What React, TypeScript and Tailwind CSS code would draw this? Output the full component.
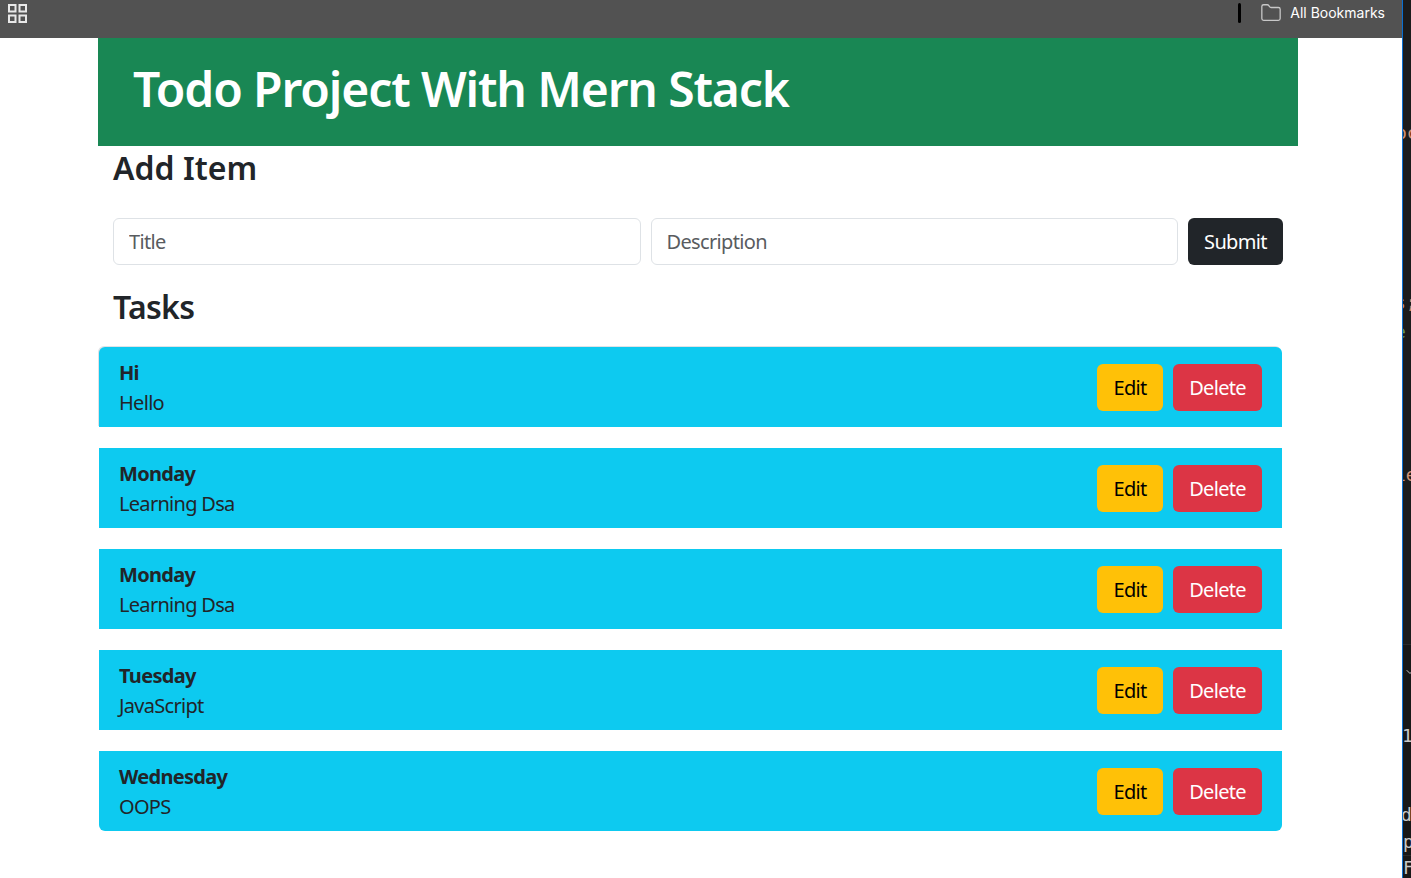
import { ChevronDown, Folder } from "lucide-react";

const tasks = [
  { title: "Hi", description: "Hello" },
  { title: "Monday", description: "Learning Dsa" },
  { title: "Monday", description: "Learning Dsa" },
  { title: "Tuesday", description: "JavaScript" },
  { title: "Wednesday", description: "OOPS" },
];

function AppsIcon() {
  return (
    <svg width="19" height="19" viewBox="0 0 19 19" fill="none" stroke="#e8e8e8" strokeWidth="2">
      <rect x="1" y="1" width="6.5" height="6.5" />
      <rect x="11.5" y="1" width="6.5" height="6.5" />
      <rect x="1" y="11.5" width="6.5" height="6.5" />
      <rect x="11.5" y="11.5" width="6.5" height="6.5" />
    </svg>
  );
}

function TaskRow({ title, description }: { title: string; description: string }) {
  return (
    <li className="flex h-20 items-center justify-between bg-[#0dcaf0] px-5 tracking-[-0.7px] first:rounded-t-md first:shadow-[-1px_-1px_0_#dfe2e6] last:rounded-b-md">
      <div className="pt-0.5 text-[#212529]">
        <div className="h-[30px] text-[20px] leading-[30px] font-bold">{title}</div>
        <div className="h-[30px] text-[20px] leading-[30px]">{description}</div>
      </div>
      <div className="flex gap-2.5">
        <button className="h-[47px] w-[66px] rounded-md bg-[#ffc107] pt-0.5 text-[20px] text-black">Edit</button>
        <button className="h-[47px] w-[89px] rounded-md bg-[#dc3545] pt-0.5 text-[20px] text-white">Delete</button>
      </div>
    </li>
  );
}

export default function App() {
  return (
    <div className="flex h-[878px] overflow-hidden bg-white font-['Noto_Sans','Open_Sans',sans-serif]">
      <div className="flex w-[1402px] flex-col">
        {/* Browser bookmarks bar */}
        <div className="flex h-[38px] shrink-0 items-center bg-[#525252] pb-[12px] pl-[8px] pr-[17px]">
          <AppsIcon />
          <div className="ml-auto h-[20px] w-[3px] rounded-sm bg-black" />
          <Folder size={22} strokeWidth={1.4} className="ml-[19px] text-[#c8c8c8]" />
          <span className="mb-[2px] ml-[8px] font-['Inter',sans-serif] text-[14px] text-white">All Bookmarks</span>
        </div>

        <div className="ml-[98px] w-[1200px]">
          <header className="flex h-[108px] items-center bg-[#198754] pb-[6px] pl-[35px]">
            <h1 className="text-[48px] leading-none font-semibold tracking-[-1.12px] text-white">Todo Project With Mern Stack</h1>
          </header>

          <div className="px-[15px]">
            <h2 className="mt-[3px] h-[38px] text-[32px] leading-[38px] font-semibold text-[#212529]">Add Item</h2>
            <form className="mt-[31px] flex gap-2.5 tracking-[-0.65px]">
              <input
                placeholder="Title"
                className="h-[47px] flex-1 rounded-md border border-[#dee2e6] px-[15px] text-[20px] placeholder:text-[#595c5f]"
              />
              <input
                placeholder="Description"
                className="h-[47px] flex-1 rounded-md border border-[#dee2e6] px-[15px] text-[20px] placeholder:text-[#595c5f]"
              />
              <button type="button" className="h-[47px] w-[95px] rounded-md bg-[#212529] text-[20px] text-white">
                Submit
              </button>
            </form>
            <h2 className="mt-[23px] h-[38px] text-[32px] leading-[38px] font-semibold tracking-[-0.7px] text-[#212529]">Tasks</h2>
          </div>

          <ul className="mt-[21px] ml-px flex w-[1183px] flex-col gap-[21px]">
            {tasks.map((task, i) => (
              <TaskRow key={i} title={task.title} description={task.description} />
            ))}
          </ul>
        </div>
      </div>

      {/* Sliver of the editor window behind the browser */}
      <div className="w-[9px] shrink-0 overflow-hidden border-l border-[#0a6fd0] bg-[#1c1c1c] font-['DejaVu_Sans_Mono',monospace] text-[18px] leading-[20px]">
        <div className="mt-[123px] -ml-[7px] h-[20px] whitespace-nowrap text-[#ce9178]">oc</div>
        <div className="mt-[150px] -ml-[8px] h-[20px] whitespace-nowrap text-[#ce9178]">s;</div>
        <div className="mt-[9px] -ml-[8px] h-[20px] whitespace-nowrap text-[#6a9955]">e</div>
        <div className="mt-[123px] -ml-[8px] h-[20px] whitespace-nowrap text-[#ce9178]">ie</div>
        <div className="mt-[159px] h-[234px] border-t border-[#2b2b2b] bg-[#181818] pt-[17px]">
          <div className="flex h-[20px] items-center pl-px">
            <ChevronDown size={12} className="shrink-0 text-[#c8c8c8]" />
          </div>
          <div className="mt-[44px] -ml-px h-[20px] whitespace-nowrap text-[#c8c8c8]">1</div>
          <div className="mt-[59px] -ml-[2px] h-[20px] whitespace-nowrap text-[#c8c8c8]">d</div>
          <div className="mt-[7px] h-[20px] whitespace-nowrap text-[#c8c8c8]">p</div>
          <div className="mt-[3px] h-[23px] border-t border-[#2b2b2b] pt-[2px] whitespace-nowrap text-[#c8c8c8]">F</div>
        </div>
      </div>
    </div>
  );
}
